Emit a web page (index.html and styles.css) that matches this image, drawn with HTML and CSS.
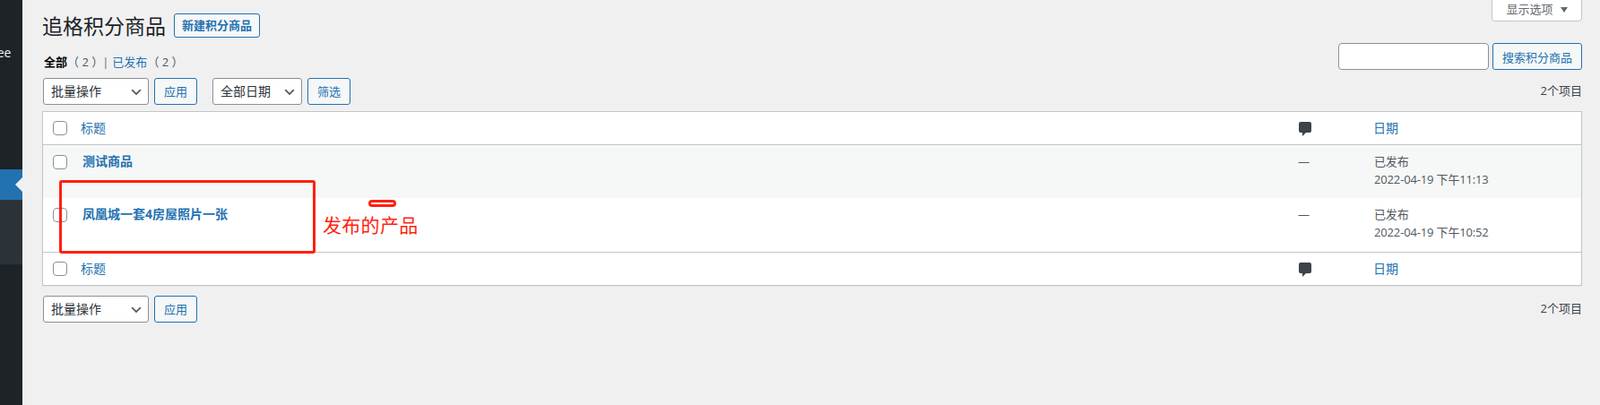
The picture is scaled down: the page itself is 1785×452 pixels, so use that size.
FILE: index.html
```html
<!DOCTYPE html>
<html lang="zh-CN">
<head>
  <meta charset="UTF-8">
  <title>追格积分商品</title>
  <link rel="stylesheet" href="styles.css">
</head>
<body>

  <div class="adminmenu">
    <div class="menu-name">ee</div>
    <div class="menu-current"><span class="menu-arrow"></span></div>
    <div class="menu-sub"></div>
  </div>

  <div class="content">
    <div class="screen-meta">
      <button class="screen-btn">显示选项<span class="screen-arrow"></span></button>
    </div>

    <div class="head">
      <h1 class="page-title">追格积分商品</h1>
      <a class="page-action">新建积分商品</a>
    </div>

    <div class="filter-row">
      <ul class="subsubsub">
        <li class="current">全部<span class="count">（ 2 ）</span></li>
        <li class="sep">|</li>
        <li><a>已发布</a><span class="count">（ 2 ）</span></li>
      </ul>
      <div class="search-box">
        <input class="search-input" type="text">
        <button class="btn btn-search">搜索积分商品</button>
      </div>
    </div>

    <div class="tablenav top">
      <select class="sel sel-bulk"><option>批量操作</option></select>
      <button class="btn btn-apply">应用</button>
      <select class="sel sel-date"><option>全部日期</option></select>
      <button class="btn btn-apply">筛选</button>
      <span class="num">2个项目</span>
    </div>

    <table class="list">
      <thead>
        <tr>
          <td class="col-check"><span class="cb"></span></td>
          <td class="col-title"><a>标题</a></td>
          <td class="col-comment"><svg class="bubble" width="14" height="16" viewBox="0 0 14 16"><path d="M2 0h10a2 2 0 0 1 2 2v8a2 2 0 0 1-2 2H8l-4 4v-4H2a2 2 0 0 1-2-2V2a2 2 0 0 1 2-2z"/></svg></td>
          <td class="col-date"><a>日期</a></td>
        </tr>
      </thead>
      <tbody>
        <tr class="alt">
          <td class="col-check"><span class="cb"></span></td>
          <td class="col-title"><a class="row-title">测试商品</a></td>
          <td class="col-comment">—</td>
          <td class="col-date">已发布<br>2022-04-19 下午11:13</td>
        </tr>
        <tr>
          <td class="col-check"><span class="cb"></span></td>
          <td class="col-title"><a class="row-title">凤凰城一套4房屋照片一张</a></td>
          <td class="col-comment">—</td>
          <td class="col-date">已发布<br>2022-04-19 下午10:52</td>
        </tr>
      </tbody>
      <tfoot>
        <tr>
          <td class="col-check"><span class="cb"></span></td>
          <td class="col-title"><a>标题</a></td>
          <td class="col-comment"><svg class="bubble" width="14" height="16" viewBox="0 0 14 16"><path d="M2 0h10a2 2 0 0 1 2 2v8a2 2 0 0 1-2 2H8l-4 4v-4H2a2 2 0 0 1-2-2V2a2 2 0 0 1 2-2z"/></svg></td>
          <td class="col-date"><a>日期</a></td>
        </tr>
      </tfoot>
    </table>

    <div class="tablenav bottom">
      <select class="sel sel-bulk"><option>批量操作</option></select>
      <button class="btn btn-apply">应用</button>
      <span class="num">2个项目</span>
    </div>
  </div>

  <!-- red marks drawn over the screenshot -->
  <div class="mark-box"></div>
  <div class="mark-dash"></div>
  <div class="mark-label">发布的产品</div>

</body>
</html>
```

FILE: styles.css
```css
* {
  box-sizing: border-box;
}

html, body {
  height: 452px;
  overflow: hidden;
}

body {
  margin: 0;
  display: flex;
  position: relative;
  background: #f0f0f1;
  color: #3c434a;
  font-family: "Open Sans", "Noto Sans CJK SC", sans-serif;
  font-size: 13px;
}

a {
  color: #2271b1;
}

/* admin menu */
.adminmenu {
  width: 25px;
  flex: none;
  background: #1d2327;
  overflow: hidden;
}

.menu-name {
  margin: 48px 0 0 -18px;
  height: 22px;
  line-height: 22px;
  color: #f0f0f1;
  font-size: 14px;
  white-space: nowrap;
}

.menu-name::before {
  content: "xx";
  visibility: hidden;
}

.menu-current {
  margin-top: 119px;
  height: 34px;
  background: #2271b1;
  display: flex;
  justify-content: flex-end;
  align-items: center;
}

.menu-arrow {
  border: 8px solid transparent;
  border-right-color: #f0f0f1;
  border-left-width: 0;
}

.menu-sub {
  height: 72px;
  background: #2c3338;
}

/* main area */
.content {
  width: 1760px;
  padding: 0 20px 0 22px;
}

.screen-meta {
  height: 0;
  display: flex;
  justify-content: flex-end;
}

.screen-btn {
  width: 101px;
  height: 25px;
  margin-top: -1px;
  padding: 0 0 5px;
  background: #fff;
  border: 1px solid #c3c4c7;
  border-radius: 0 0 4px 4px;
  color: #646970;
  font: inherit;
}

.screen-arrow {
  display: inline-block;
  margin-left: 8px;
  vertical-align: 1px;
  border: 4px solid transparent;
  border-top: 6px solid #646970;
  border-bottom-width: 0;
}

.head {
  display: flex;
  align-items: center;
  gap: 9px;
  padding-top: 14px;
}

.page-title {
  margin: 0;
  color: #1d2327;
  font-size: 23px;
  font-weight: 400;
  line-height: 30px;
}

.page-action {
  height: 27px;
  margin-top: -1px;
  padding: 0 8px;
  border: 1px solid #2271b1;
  border-radius: 3px;
  background: #f6f7f7;
  font-weight: 700;
  line-height: 24px;
  white-space: nowrap;
}

.filter-row {
  display: flex;
  justify-content: space-between;
  margin-top: 4px;
  height: 39px;
}

.subsubsub {
  display: flex;
  margin: 11px 0 0 2px;
  padding: 0;
  list-style: none;
  line-height: 20px;
  height: 20px;
}

.subsubsub .current {
  color: #000;
  font-weight: 700;
}

.count {
  color: #50575e;
  font-weight: 400;
}

.sep {
  margin: 0 4px 0 -1px;
  color: #646970;
}

.search-box {
  display: flex;
  gap: 4px;
  align-items: flex-start;
}

.search-input {
  width: 168px;
  height: 30px;
  padding: 0 8px;
  background: #fff;
  border: 1px solid #8c8f94;
  border-radius: 4px;
}

.btn {
  height: 30px;
  padding: 0 10px;
  background: #f6f7f7;
  border: 1px solid #2271b1;
  border-radius: 3px;
  color: #2271b1;
  font: inherit;
  white-space: nowrap;
}

.btn-search {
  width: 100px;
  padding: 0;
}

.btn-apply {
  width: 48px;
  padding: 0 0 2px;
}

.tablenav {
  display: flex;
  align-items: center;
  height: 30px;
  padding-left: 1px;
}

.tablenav .num {
  margin-left: auto;
  margin-bottom: 3px;
}

.tablenav.bottom {
  margin-top: 11px;
}

.sel {
  height: 30px;
  padding: 0 24px 2px 8px;
  background: #fff url("data:image/svg+xml;charset=UTF-8,%3Csvg xmlns='http://www.w3.org/2000/svg' width='20' height='20'%3E%3Cpath d='M5 6l5 5 5-5 2 1-7 7-7-7z' fill='%23555'/%3E%3C/svg%3E") no-repeat right 5px top 55%;
  background-size: 16px 16px;
  border: 1px solid #8c8f94;
  border-radius: 3px;
  color: #2c3338;
  font: inherit;
  font-size: 14px;
  appearance: none;
}

.sel-bulk {
  width: 118px;
  margin-right: 6px;
}

.sel-date {
  width: 100px;
  margin: 0 6px 0 17px;
}

/* table */
.list {
  width: 100%;
  margin-top: 7px;
  border: 1px solid #c3c4c7;
  border-spacing: 0;
  background: #fff;
  table-layout: fixed;
  box-shadow: 0 1px 1px rgba(0, 0, 0, 0.04);
}

.list td {
  padding: 0;
  vertical-align: top;
}

.list thead td {
  height: 37px;
  padding-top: 9px;
  border-bottom: 1px solid #c3c4c7;
  font-size: 14px;
  line-height: 18px;
}

.list tfoot td {
  height: 37px;
  padding-top: 9px;
  border-top: 1px solid #c3c4c7;
  font-size: 14px;
  line-height: 18px;
}

.list tbody td {
  height: 59px;
  padding-top: 8px;
  line-height: 20px;
  color: #50575e;
}

.list tbody tr + tr td {
  height: 60px;
  padding-top: 8px;
}

.list .alt td {
  background: #f6f7f7;
}

.list .col-check {
  width: 42px;
  padding-left: 11px;
}

.list .col-comment {
  width: 84px;
  padding-left: 2px;
}

.list .col-date {
  width: 233px;
  padding-left: 1px;
}

.list tbody .col-comment {
  padding-left: 1px;
}

.list tbody .col-date {
  padding-left: 2px;
  letter-spacing: -0.15px;
}

.cb {
  display: block;
  width: 16px;
  height: 16px;
  margin-top: 1px;
  background: #fff;
  border: 1px solid #8c8f94;
  border-radius: 4px;
}

.list tbody .cb {
  margin-top: 3px;
}

.row-title {
  display: block;
  padding-left: 2px;
  font-size: 14px;
  font-weight: 700;
}

.bubble {
  display: block;
  fill: #3c434a;
  margin-top: 2px;
}

/* annotations */
.mark-box {
  position: absolute;
  left: 66px;
  top: 201px;
  width: 286px;
  height: 82px;
  border: 3px solid #ff1f10;
  border-radius: 3px;
}

.mark-dash {
  position: absolute;
  left: 411px;
  top: 223px;
  width: 31px;
  height: 8px;
  border: 3px solid #ff1f10;
  border-radius: 4px;
}

.mark-label {
  position: absolute;
  left: 360px;
  top: 236px;
  color: #ff1f10;
  font-size: 21px;
  letter-spacing: 0.3px;
  line-height: 30px;
  white-space: nowrap;
}
```
